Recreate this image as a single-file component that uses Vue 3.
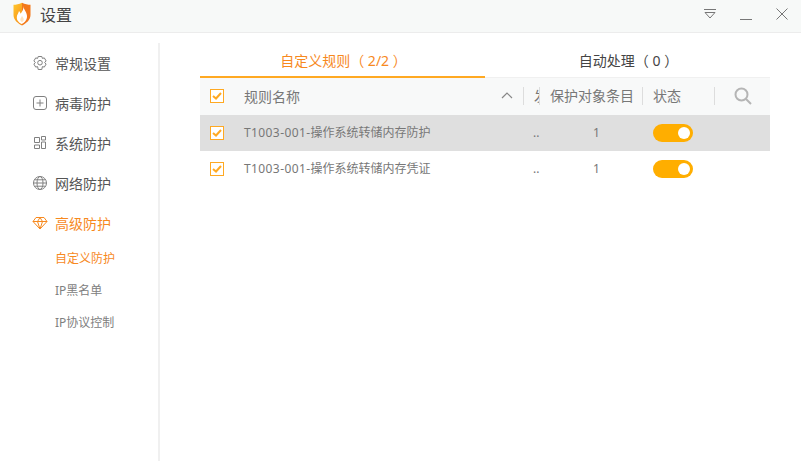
<script setup>
const menu = [
  { name: '常规设置', icon: 'gear' },
  { name: '病毒防护', icon: 'plus' },
  { name: '系统防护', icon: 'grid' },
  { name: '网络防护', icon: 'globe' },
  { name: '高级防护', icon: 'gem', active: true },
]
const subMenu = [
  { name: '自定义防护', active: true },
  { name: 'IP黑名单' },
  { name: 'IP协议控制' },
]
const rules = [
  { code: 'T1003-001-', name: '操作系统转储内存防护', count: 1, hover: true },
  { code: 'T1003-001-', name: '操作系统转储内存凭证', count: 1 },
]
</script>

<template>
  <div class="window">
    <header class="titlebar">
      <svg class="logo" width="20" height="24" viewBox="0 0 20 24">
        <defs>
          <linearGradient id="shield" x1="0" y1="0" x2="0.6" y2="1">
            <stop offset="0" stop-color="#ffc92e" />
            <stop offset="1" stop-color="#f8921a" />
          </linearGradient>
        </defs>
        <path d="M10 .8 C7 2.200 4 2.800 1.500 2.800 V13 C1.500 18 6 21.500 10 23.500Z" fill="url(#shield)" />
        <path d="M10 .8 C13 2.200 16 2.800 18.500 2.800 V13 C18.500 18 14 21.500 10 23.500Z" fill="#f3791b" />
        <path d="M11.500 4 C11.500 8 15.500 10.500 15 15 C14.700 18.500 12 21 9.800 22 C7 20.800 4.600 18.500 4.800 15 C5 12.500 6.500 11.200 7 9 C8 10 8.400 10.800 8.600 11.800 C10.200 9.500 11.800 7 11.500 4Z" fill="#fff" />
        <path d="M10 13.500 C10.500 15.500 12 16 11.700 18 C11.500 19.200 10.700 19.800 10 20 C9 19.600 8.200 18.800 8.300 17.600 C8.400 16 9.700 15.500 10 13.500Z" fill="#ffe3bd" />
      </svg>
      <span class="title">设置</span>
      <div class="controls">
        <svg width="12" height="12" viewBox="0 0 12 12" fill="none" stroke="#777" stroke-width="1">
          <path d="M0 1.500H12" />
          <path d="M1 4.500H11L6 10Z" />
        </svg>
        <svg width="12" height="12" viewBox="0 0 12 12" stroke="#777" stroke-width="1">
          <path d="M0 11.500H12" />
        </svg>
        <svg width="12" height="12" viewBox="0 0 12 12" stroke="#777" stroke-width="1">
          <path d="M.5 .5L11.500 11.500M11.500 .5L.5 11.500" />
        </svg>
      </div>
    </header>

    <div class="body">
      <aside class="sidebar">
        <div v-for="item in menu" :key="item.name" class="menu-item" :class="{ active: item.active }">
          <svg class="menu-icon" width="16" height="16" viewBox="0 0 16 16" fill="none" stroke="currentColor" stroke-width="1">
            <template v-if="item.icon === 'gear'">
              <path d="M6.200 1.500H9.800L10.400 3.400L12.300 2.900L14.100 5.900L12.700 7.500L14.100 9.100L12.300 12.100L10.400 11.600L9.800 14.500H6.200L5.600 11.600L3.700 12.100L1.900 9.100L3.300 7.500L1.900 5.900L3.700 2.900L5.600 3.400Z" stroke-linejoin="round" />
              <circle cx="8" cy="7.700" r="2.300" />
            </template>
            <template v-else-if="item.icon === 'plus'">
              <rect x="1.500" y="1.500" width="13" height="13" rx="2.500" />
              <path d="M8 4.500V11.500M4.500 8H11.500" />
            </template>
            <template v-else-if="item.icon === 'grid'">
              <path d="M2.500 2.500H7.500V7.500H2.500ZM9.500 1.500H13.500V5H9.500ZM9.500 7H13.500V13.500H9.500ZM2.500 10H7.500V13.500H2.500Z" />
            </template>
            <template v-else-if="item.icon === 'globe'">
              <circle cx="8" cy="8" r="6.500" />
              <ellipse cx="8" cy="8" rx="3" ry="6.500" />
              <path d="M1.500 8H14.500M2.500 4.800H13.500M2.500 11.200H13.500" />
            </template>
            <template v-else>
              <path d="M4 2.500H12L15 6.500L8 14L1 6.500ZM1 6.500H15M5.500 6.500L8 14L10.500 6.500L8 2.500L5.500 6.500Z" stroke-linejoin="round" />
            </template>
          </svg>
          <span>{{ item.name }}</span>
        </div>
        <div class="sub-menu">
          <div v-for="sub in subMenu" :key="sub.name" class="sub-item" :class="{ active: sub.active }">{{ sub.name }}</div>
        </div>
      </aside>

      <main class="content">
        <div class="tabs">
          <div class="tab active">自定义规则（ 2/2 ）</div>
          <div class="tab">自动处理（ 0 ）</div>
        </div>

        <div class="row head">
          <span class="check"><svg width="10" height="8" viewBox="0 0 10 8" fill="none" stroke="#ffa922" stroke-width="2"><path d="M1 4L4 6.500L9 1" /></svg></span>
          <div class="cell name-cell">
            <span>规则名称</span>
            <svg class="sort" width="12" height="7" viewBox="0 0 12 7" fill="none" stroke="#888" stroke-width="1.200"><path d="M1 6L6 1L11 6" /></svg>
          </div>
          <div class="cell clip sep">发</div>
          <div class="cell count sep">保护对象条目</div>
          <div class="cell state sep">状态</div>
          <div class="cell search sep">
            <svg width="18" height="18" viewBox="0 0 18 18" fill="none" stroke="#b5b5b5" stroke-width="2"><circle cx="7.500" cy="7.500" r="6" /><path d="M12 12L17 17" /></svg>
          </div>
        </div>

        <div v-for="rule in rules" :key="rule.name" class="row" :class="{ hover: rule.hover }">
          <span class="check"><svg width="10" height="8" viewBox="0 0 10 8" fill="none" stroke="#ffa922" stroke-width="2"><path d="M1 4L4 6.500L9 1" /></svg></span>
          <div class="cell rule-name"><span class="code">{{ rule.code }}</span>{{ rule.name }}</div>
          <div class="cell dots">..</div>
          <div class="cell num">{{ rule.count }}</div>
          <div class="cell state"><span class="switch"><i></i></span></div>
          <div class="cell"></div>
        </div>
      </main>
    </div>
  </div>
</template>

<style>
body {
  margin: 0;
  background: #fff;
}
</style>

<style scoped>
.window {
  width: 801px;
  height: 461px;
  display: flex;
  flex-direction: column;
  overflow: hidden;
  font-family: "Noto Sans", "Noto Sans CJK SC", sans-serif;
  color: #555;
  background: #fff;
}
.titlebar {
  height: 33px;
  flex: none;
  box-sizing: border-box;
  display: flex;
  align-items: center;
  padding: 0 13px 5px 12px;
  background: #f7f9f8;
  border-bottom: 1px solid #ececec;
}
.logo {
  margin-right: 8px;
}
.title {
  font-size: 16px;
  color: #444;
}
.controls {
  margin-left: auto;
  display: flex;
  align-items: center;
  gap: 24px;
}
.body {
  flex: 1;
  display: flex;
  min-height: 0;
}
.sidebar {
  width: 158px;
  flex: none;
  margin-top: 10px;
  border-right: 2px solid #f0f0f0;
  box-sizing: content-box;
}
.menu-item {
  height: 40px;
  display: flex;
  align-items: center;
  padding-left: 32px;
  font-size: 14px;
  color: #555;
}
.menu-icon {
  color: #808080;
  margin-right: 7px;
}
.menu-item.active,
.menu-item.active .menu-icon {
  color: #f7891e;
}
.sub-menu {
  padding-left: 55px;
}
.sub-item {
  height: 32px;
  line-height: 32px;
  font-size: 12px;
  color: #808080;
}
.sub-item.active {
  color: #f7891e;
}
.content {
  width: 570px;
  margin-left: 40px;
  flex: none;
}
.tabs {
  display: flex;
  height: 45px;
  padding-top: 11px;
  box-sizing: border-box;
  border-bottom: 1px solid #f0f0f0;
}
.tab {
  height: 34px;
  line-height: 33px;
  box-sizing: border-box;
  padding-left: 2px;
  text-align: center;
  font-size: 14px;
  color: #444;
}
.tab:first-child {
  width: 285px;
}
.tab:last-child {
  flex: 1;
}
.tab.active {
  color: #f7891e;
  border-bottom: 2px solid #ffa922;
}
.row {
  display: grid;
  grid-template-columns: 44px 279px 16px 103px 72px 56px;
  align-items: center;
  height: 36px;
  font-size: 12px;
  color: #777;
}
.row.head {
  height: 37px;
  box-sizing: border-box;
  padding-bottom: 2px;
  background: #f8f9f9;
  font-size: 14px;
  color: #777;
}
.row.hover {
  background: #dfdfdf;
}
.check {
  width: 12px;
  height: 12px;
  margin-left: 10px;
  border: 1px solid #ffa922;
  background: #fff;
  display: flex;
  align-items: center;
  justify-content: center;
}
.check svg {
  flex: none;
}
.cell {
  min-width: 0;
}
.name-cell {
  display: flex;
  align-items: center;
  justify-content: space-between;
  padding-right: 10px;
}
.sep {
  height: 18px;
  line-height: 18px;
  border-left: 1px solid #ddd;
  box-sizing: border-box;
}
.clip {
  overflow: hidden;
  white-space: nowrap;
  padding-left: 10px;
}
.count {
  padding-left: 10px;
  white-space: nowrap;
}
.head .state {
  padding-left: 10px;
}
.search {
  padding-left: 19px;
}
.search svg {
  display: block;
}
.rule-name,
.dots,
.num {
  padding-bottom: 2px;
}
.code {
  letter-spacing: 0.4px;
}
.dots {
  padding-left: 10px;
}
.num {
  text-align: center;
  padding-left: 12px;
}
.row:not(.head) .state {
  padding-left: 11px;
}
.switch {
  display: block;
  width: 40px;
  height: 18px;
  border-radius: 9px;
  background: #ffae00;
  position: relative;
}
.switch i {
  position: absolute;
  top: 3px;
  right: 3px;
  width: 12px;
  height: 12px;
  border-radius: 50%;
  background: #fff;
}
</style>
